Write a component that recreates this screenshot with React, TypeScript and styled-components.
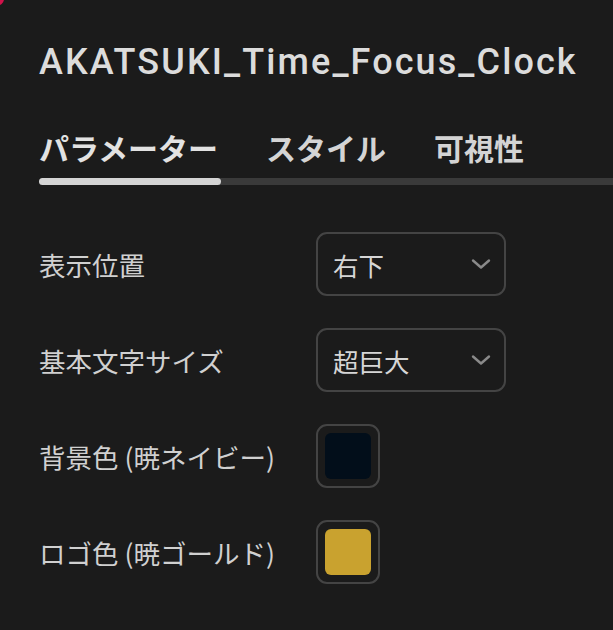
import React from "react";
import styled, { createGlobalStyle } from "styled-components";

const GlobalStyle = createGlobalStyle`
  html, body {
    margin: 0;
    padding: 0;
    background: #1b1b1b;
  }
  body {
    font-family: Roboto, "Noto Sans CJK JP", sans-serif;
    color: #d6d6d6;
  }
`;

const Panel = styled.div`
  position: relative;
  width: 613px;
  height: 630px;
  overflow: hidden;
  background: #1b1b1b;
  padding-left: 39px;
  box-sizing: border-box;
`;

// the little red blob peeking in at the top-left corner
const CornerDot = styled.div`
  position: absolute;
  left: -12px;
  top: -8px;
  width: 16px;
  height: 14px;
  border-radius: 50%;
  background: #d0124a;
`;

const Title = styled.h1`
  margin: 0;
  padding-top: 40px;
  font-family: Roboto, "Noto Sans CJK JP", sans-serif;
  font-weight: 500;
  font-size: 36px;
  letter-spacing: 2.1px;
  line-height: 44px;
  color: #dcdcdc;
  white-space: nowrap;
`;

const Tabs = styled.div`
  display: flex;
  gap: 48px;
  margin-top: 46px;
`;

const Tab = styled.div<{ $active?: boolean }>`
  font-family: "Noto Sans CJK JP", sans-serif;
  font-weight: 700;
  font-size: 30px;
  line-height: 34px;
  color: ${(p) => (p.$active ? "#e2e2e2" : "#d4d4d4")};
`;

const Track = styled.div`
  margin-top: 14px;
  height: 7px;
  background: #3a3a3a;
  border-radius: 4px 0 0 4px;
`;

const Indicator = styled.div`
  width: 182px;
  height: 7px;
  border-radius: 4px;
  background: #d4d4d4;
`;

const Fields = styled.div`
  display: flex;
  flex-direction: column;
  gap: 32px;
  margin-top: 47px;
`;

const Row = styled.div`
  display: grid;
  grid-template-columns: 277px auto;
  align-items: center;
`;

const Label = styled.div`
  font-family: "Noto Sans CJK JP", sans-serif;
  font-size: 26.5px;
  color: #d0d0d0;
  white-space: nowrap;
`;

const Select = styled.div`
  box-sizing: border-box;
  width: 190px;
  height: 64px;
  border: 2px solid #444444;
  border-radius: 11px;
  display: flex;
  align-items: center;
  justify-content: space-between;
  padding: 0 12px 0 15px;
  font-family: "Noto Sans CJK JP", sans-serif;
  font-size: 25.5px;
  color: #d6d6d6;
`;

const Chevron = styled.svg`
  width: 22px;
  height: 22px;
  color: #8a8a8a;
`;

const Swatch = styled.div`
  box-sizing: border-box;
  width: 64px;
  height: 64px;
  border: 2px solid #444444;
  border-radius: 11px;
  padding: 7px;
`;

const SwatchFill = styled.div<{ $color: string }>`
  width: 100%;
  height: 100%;
  border-radius: 6px;
  background: ${(p) => p.$color};
`;

const ChevronDown = () => (
  <Chevron viewBox="0 0 22 22" fill="none" stroke="currentColor" strokeWidth={2.4} strokeLinecap="round" strokeLinejoin="round">
    <path d="M3 7.5 L11 14.5 L19 7.5" />
  </Chevron>
);

const App: React.FC = () => {
  return (
    <>
      <GlobalStyle />
      <Panel>
        <CornerDot />
        <Title>AKATSUKI_Time_Focus_Clock</Title>
        <Tabs>
          <Tab $active>パラメーター</Tab>
          <Tab>スタイル</Tab>
          <Tab>可視性</Tab>
        </Tabs>
        <Track>
          <Indicator />
        </Track>
        <Fields>
          <Row>
            <Label>表示位置</Label>
            <Select>
              右下
              <ChevronDown />
            </Select>
          </Row>
          <Row>
            <Label>基本文字サイズ</Label>
            <Select>
              超巨大
              <ChevronDown />
            </Select>
          </Row>
          <Row>
            <Label>背景色 (暁ネイビー)</Label>
            <Swatch>
              <SwatchFill $color="#020e1a" />
            </Swatch>
          </Row>
          <Row>
            <Label>ロゴ色 (暁ゴールド)</Label>
            <Swatch>
              <SwatchFill $color="#c9a22f" />
            </Swatch>
          </Row>
        </Fields>
      </Panel>
    </>
  );
};

export default App;
